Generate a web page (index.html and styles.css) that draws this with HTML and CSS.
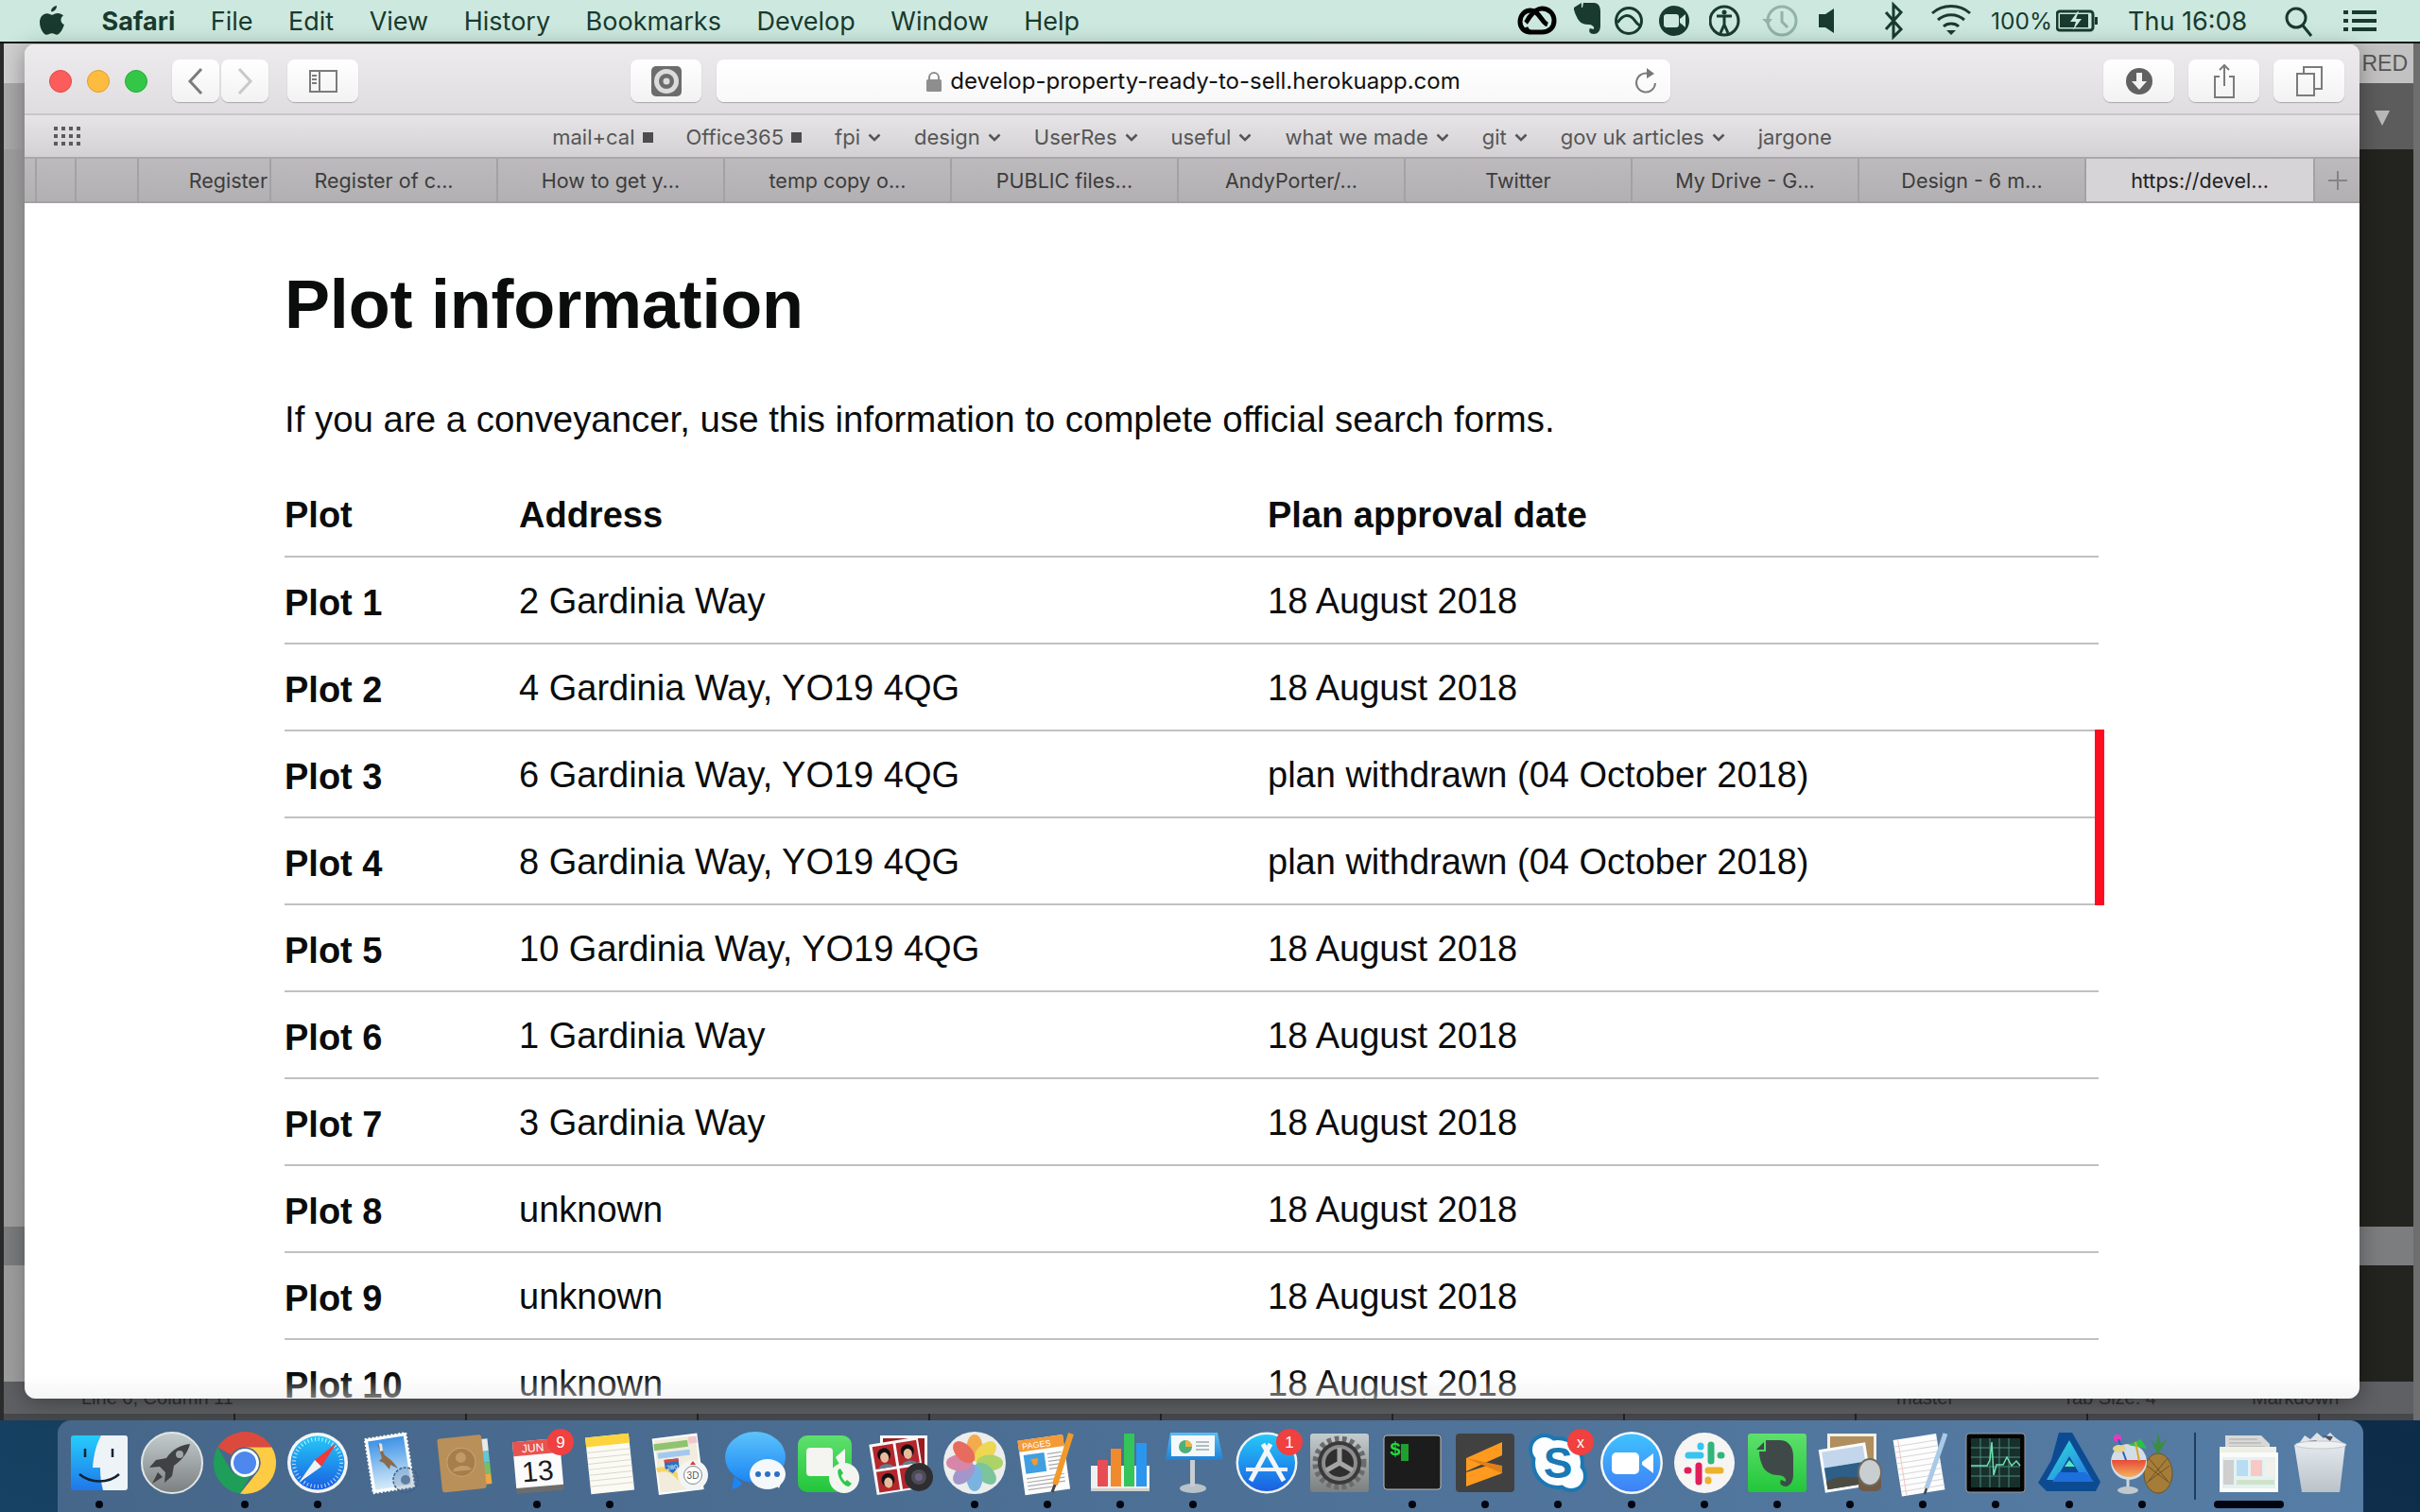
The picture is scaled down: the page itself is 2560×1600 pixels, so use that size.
FILE: index.html
```html
<!DOCTYPE html>
<html lang="en">
  <head>
    <meta charset="UTF-8" />
    <title>Plot information</title>
    <meta name="viewport" content="width=device-width, initial-scale=1.0" />
    <link rel="stylesheet" href="styles.css">
  </head>
  <body>
    <!-- shared gradients for the dock icons -->
    <svg class="svg-defs" aria-hidden="true">
      <defs>
        <linearGradient id="g-finder" x1="0" y1="0" x2="0" y2="1"><stop offset="0" stop-color="#25cdfb"/><stop offset="1" stop-color="#1f78ea"/></linearGradient>
        <linearGradient id="g-silver" x1="0" y1="0" x2="0" y2="1"><stop offset="0" stop-color="#c4cdce"/><stop offset="1" stop-color="#7b7f80"/></linearGradient>
        <linearGradient id="g-blue" x1="0" y1="0" x2="0" y2="1"><stop offset="0" stop-color="#25c8f8"/><stop offset="1" stop-color="#1a5fe2"/></linearGradient>
        <linearGradient id="g-sky" x1="0" y1="0" x2="0" y2="1"><stop offset="0" stop-color="#3f93e6"/><stop offset="1" stop-color="#d6ebf8"/></linearGradient>
        <linearGradient id="g-bubble" x1="0" y1="0" x2="0" y2="1"><stop offset="0" stop-color="#5cc3fb"/><stop offset="1" stop-color="#1b86f4"/></linearGradient>
        <linearGradient id="g-green" x1="0" y1="0" x2="0" y2="1"><stop offset="0" stop-color="#5ee06d"/><stop offset="1" stop-color="#22c63a"/></linearGradient>
        <linearGradient id="g-zoom" x1="0" y1="0" x2="0" y2="1"><stop offset="0" stop-color="#3fc2fe"/><stop offset="1" stop-color="#3e80f7"/></linearGradient>
        <linearGradient id="g-keynote" x1="0" y1="0" x2="0" y2="1"><stop offset="0" stop-color="#5dbcf5"/><stop offset="1" stop-color="#1e82d6"/></linearGradient>
        <linearGradient id="g-affinity" x1="0" y1="0" x2="1" y2="1"><stop offset="0" stop-color="#2fe3d8"/><stop offset="1" stop-color="#2474e8"/></linearGradient>
        <linearGradient id="g-drink" x1="0" y1="0" x2="0" y2="1"><stop offset="0" stop-color="#e9483a"/><stop offset="1" stop-color="#f2b35c"/></linearGradient>
        <linearGradient id="g-bin" x1="0" y1="0" x2="0" y2="1"><stop offset="0" stop-color="#f2f4f5"/><stop offset="1" stop-color="#c6cacc"/></linearGradient>
      </defs>
    </svg>

    <header class="menubar">
      <div class="menu-left">
        <svg class="apple" width="26" height="32" viewBox="0 0 26 32"><path d="M18 0c.3 2.900-2.400 6.600-5.900 6.300C11.700 3.300 14.900.3 18 0zM25 10.600c-3.700 2.300-3.200 7.800.9 9.700-1.300 3.800-4.500 10.400-7.600 10.400-2.100 0-2.900-1.400-5.400-1.400s-3.400 1.400-5.500 1.400C3.500 30.700 0 23 0 17.700 0 11.700 3.900 8.300 7.600 8.300c2.400 0 4 1.500 5.500 1.500 1.400 0 3.300-1.700 6-1.700 2.100 0 4.500 1 5.900 2.500z"/></svg>
        <span class="menu-app">Safari</span>
        <span>File</span>
        <span>Edit</span>
        <span>View</span>
        <span>History</span>
        <span>Bookmarks</span>
        <span>Develop</span>
        <span>Window</span>
        <span>Help</span>
      </div>
      <div class="menu-right">
        <svg width="59" height="44" viewBox="0 0 59 44"><g fill="none" stroke="#000" stroke-width="5"><path d="M14 34C7 34 3 29 3 23 3 16 8 11 14 11c9 0 12 13 18 15"/><path d="M9 29c1 3 3 5 6 5h11c8 0 13-5 13-12 0-8-6-13-13-13-6 0-10 5-13 9-2 3-3 5-4 6"/></g></svg>
        <svg width="44" height="44" viewBox="0 0 44 44"><path class="ico" d="M1 8l8-5v8H1zM11 3h11c5 0 7 4 7 9v15c0 6-3 9-7 9-4 0-6-3-4-6l4 1c1-3-2-5-6-5-6 0-10-3-12-8-2-4-3-7-3-10h9z"/></svg>
        <svg width="47" height="44" viewBox="0 0 47 44"><g class="ico-line"><circle cx="15" cy="22" r="13.500"/><path d="M3 24c6-9 12-9 16-5s5 8 9 8"/></g></svg>
        <svg width="53" height="44" viewBox="0 0 53 44"><circle class="ico" cx="16" cy="22" r="16"/><rect x="5" y="15" width="16" height="14" rx="3" fill="#cde9df"/><path d="M22 20l6-5v14l-6-5z" fill="#cde9df"/></svg>
        <svg width="56" height="44" viewBox="0 0 56 44"><circle class="ico-line" cx="16" cy="22" r="15"/><circle class="ico" cx="16" cy="13" r="2.500"/><path class="ico-line" d="M8 17h16M16 18v8M16 26l-4 9M16 26l4 9"/></svg>
        <svg width="60" height="44" viewBox="0 0 60 44"><g class="ico-fade"><circle cx="21" cy="22" r="15"/><path d="M21 12v11l6 6"/></g><path class="ico-solid-fade" d="M0 20h11l-5 6z"/></svg>
        <svg width="69" height="44" viewBox="0 0 69 44"><path class="ico" d="M0 15h7l9-6v26l-9-6H0z"/></svg>
        <svg width="49" height="44" viewBox="0 0 49 44"><path class="ico-line" d="M2 13l16 18-8 8V5l8 8-16 18"/></svg>
        <svg width="64" height="44" viewBox="0 0 64 44"><g class="ico-line"><path d="M2 14c11-10 29-10 40 0"/><path d="M8 21c8-7 20-7 28 0"/><path d="M14 28c4-4 12-4 16 0"/></g><path class="ico" d="M17 32h10l-5 5z"/></svg>
        <span class="menu-pct">100%</span>
        <svg width="54" height="44" viewBox="0 0 54 44"><rect class="ico-line" x="1" y="12" width="38" height="20" rx="3"/><path class="ico" d="M4 15h30v14H4z"/><path d="M23 12l-8 11h6l-3 9 9-12h-6l3-8z" fill="#cde9df"/><rect class="ico" x="41" y="18" width="3" height="8"/></svg>
        <span class="menu-clock">Thu 16:08</span>
        <svg class="menu-search" width="31" height="44" viewBox="0 0 31 44"><g class="ico-line"><circle cx="12" cy="19" r="10"/><path d="M19 27l9 11"/></g></svg>
        <svg class="menu-list" width="35" height="44" viewBox="0 0 35 44"><path class="ico" d="M0 11h5v4H0zM9 11h26v4H9zM0 20h5v4H0zM9 20h26v4H9zM0 29h5v4H0zM9 29h26v4H9z"/></svg>
      </div>
    </header>

    <main class="desktop">
      <div class="back-window">
        <div class="back-title">RED</div>
        <div class="back-bar"><span class="back-arrow"></span></div>
        <div class="back-body"><div class="back-band"></div></div>
        <div class="back-status">
          <span>Line 6, Column 11</span>
          <span>master</span>
          <span>Tab Size: 4</span>
          <span>Markdown</span>
        </div>
        <div class="back-foot"></div>
      </div>

      <section class="safari">
        <div class="toolbar">
          <div class="lights">
            <span class="light red"></span>
            <span class="light amber"></span>
            <span class="light green"></span>
          </div>
          <div class="nav-group">
            <button class="tool-btn nav-btn"><svg width="18" height="30" viewBox="0 0 18 30"><path class="tb-line" d="M15 2L3 15l12 13"/></svg></button>
            <button class="tool-btn nav-btn"><svg width="18" height="30" viewBox="0 0 18 30"><path class="tb-line dim" d="M3 2l12 13L3 28"/></svg></button>
          </div>
          <button class="tool-btn sidebar-btn"><svg width="30" height="24" viewBox="0 0 30 24"><path class="tb-line thin" d="M1 1h28v22H1zM11 1v22"/><path class="tb-line thin" d="M3 6h5M3 10h5M3 14h5"/></svg></button>
          <button class="tool-btn shot-btn"><svg width="34" height="34" viewBox="0 0 34 34"><rect x="1" y="1" width="32" height="32" rx="5" fill="#6c6c6c"/><circle cx="17" cy="17" r="13" fill="#dcdcdc"/><circle cx="17" cy="17" r="8" fill="#6c6c6c"/><circle cx="17" cy="17" r="3.500" fill="#dcdcdc"/></svg></button>
          <div class="url-bar">
            <span></span>
            <div class="url-text">
              <svg width="16" height="22" viewBox="0 0 16 22"><path d="M3 10V7a5 5 0 0 1 10 0v3" fill="none" stroke="#8e8e8e" stroke-width="2"/><rect y="9" width="16" height="13" rx="1.500" fill="#8e8e8e"/></svg>
              <span>develop-property-ready-to-sell.herokuapp.com</span>
            </div>
            <svg class="reload" width="24" height="30" viewBox="0 0 24 30"><path class="tb-line thin" d="M15 7a10 10 0 1 0 7 10"/><path d="M13 1l8 6-8 5z" fill="#777"/></svg>
          </div>
          <div class="tool-right">
            <button class="tool-btn"><svg width="28" height="28" viewBox="0 0 28 28"><circle cx="14" cy="14" r="14" fill="#616161"/><path d="M11 5h6v9h5l-8 9-8-9h5z" fill="#f4f4f4"/></svg></button>
            <button class="tool-btn"><svg width="24" height="38" viewBox="0 0 24 38"><path class="tb-line thin" d="M7 14H2v22h20V14h-5M12 24V2M7 7l5-5 5 5"/></svg></button>
            <button class="tool-btn"><svg width="28" height="32" viewBox="0 0 28 32"><path class="tb-line thin" d="M1 8h18v23H1zM8 8V1h19v23h-8"/></svg></button>
          </div>
        </div>

        <nav class="bookmarks">
          <svg class="grid-icon" width="28" height="20" viewBox="0 0 28 20"><path d="M0 0h4v4H0zM8 0h4v4H8zM16 0h4v4h-4zM24 0h4v4h-4zM0 8h4v4H0zM8 8h4v4H8zM16 8h4v4h-4zM24 8h4v4h-4zM0 16h4v4H0zM8 16h4v4H8zM16 16h4v4h-4zM24 16h4v4h-4z" fill="#5b5b5b"/></svg>
          <div class="bookmark-list">
            <span class="bm">mail+cal<i class="bm-square"></i></span>
            <span class="bm">Office365<i class="bm-square"></i></span>
            <span class="bm">fpi<svg class="bm-chev" width="14" height="9" viewBox="0 0 14 9"><path d="M1.500 1.500L7 7l5.500-5.500"/></svg></span>
            <span class="bm">design<svg class="bm-chev" width="14" height="9" viewBox="0 0 14 9"><path d="M1.500 1.500L7 7l5.500-5.500"/></svg></span>
            <span class="bm">UserRes<svg class="bm-chev" width="14" height="9" viewBox="0 0 14 9"><path d="M1.500 1.500L7 7l5.500-5.500"/></svg></span>
            <span class="bm">useful<svg class="bm-chev" width="14" height="9" viewBox="0 0 14 9"><path d="M1.500 1.500L7 7l5.500-5.500"/></svg></span>
            <span class="bm">what we made<svg class="bm-chev" width="14" height="9" viewBox="0 0 14 9"><path d="M1.500 1.500L7 7l5.500-5.500"/></svg></span>
            <span class="bm">git<svg class="bm-chev" width="14" height="9" viewBox="0 0 14 9"><path d="M1.500 1.500L7 7l5.500-5.500"/></svg></span>
            <span class="bm">gov uk articles<svg class="bm-chev" width="14" height="9" viewBox="0 0 14 9"><path d="M1.500 1.500L7 7l5.500-5.500"/></svg></span>
            <span class="bm">jargone</span>
          </div>
        </nav>

        <div class="tabs">
          <div class="tab tab-a"></div>
          <div class="tab tab-b"></div>
          <div class="tab tab-c"></div>
          <div class="tab tab-clip">Register</div>
          <div class="tab">Register of c...</div>
          <div class="tab">How to get y...</div>
          <div class="tab">temp copy o...</div>
          <div class="tab">PUBLIC files...</div>
          <div class="tab">AndyPorter/...</div>
          <div class="tab">Twitter</div>
          <div class="tab">My Drive - G...</div>
          <div class="tab">Design - 6 m...</div>
          <div class="tab active">https://devel...</div>
          <div class="tab tab-add"><svg width="20" height="20" viewBox="0 0 20 20"><path d="M10 0v20M0 10h20" stroke="#848484" stroke-width="2"/></svg></div>
        </div>

        <div class="page">
          <h1 class="page-title">Plot information</h1>
          <p class="page-lead">If you are a conveyancer, use this information to complete official search forms.</p>
          <table class="plots">
            <thead>
              <tr><th>Plot</th><th>Address</th><th>Plan approval date</th></tr>
            </thead>
            <tbody>
              <tr><th>Plot 1</th><td>2 Gardinia Way</td><td>18 August 2018</td></tr>
              <tr><th>Plot 2</th><td>4 Gardinia Way, YO19 4QG</td><td>18 August 2018</td></tr>
              <tr class="withdrawn"><th>Plot 3</th><td>6 Gardinia Way, YO19 4QG</td><td>plan withdrawn (04 October 2018)</td></tr>
              <tr class="withdrawn"><th>Plot 4</th><td>8 Gardinia Way, YO19 4QG</td><td>plan withdrawn (04 October 2018)</td></tr>
              <tr><th>Plot 5</th><td>10 Gardinia Way, YO19 4QG</td><td>18 August 2018</td></tr>
              <tr><th>Plot 6</th><td>1 Gardinia Way</td><td>18 August 2018</td></tr>
              <tr><th>Plot 7</th><td>3 Gardinia Way</td><td>18 August 2018</td></tr>
              <tr><th>Plot 8</th><td>unknown</td><td>18 August 2018</td></tr>
              <tr><th>Plot 9</th><td>unknown</td><td>18 August 2018</td></tr>
              <tr><th>Plot 10</th><td>unknown</td><td>18 August 2018</td></tr>
            </tbody>
          </table>
        </div>
      </section>

      <footer class="dock">
        <div class="dock-item on"><svg viewBox="0 0 66 66"><rect x="3" y="4" width="60" height="58" rx="3" fill="url(#g-finder)"/><path d="M35 4h25a3 3 0 0 1 3 3v52a3 3 0 0 1-3 3H37c-2-8-3-14-3-24h-8c1-14 4-25 9-34z" fill="#eef3f8"/><path d="M18 18v9M47 18v9" stroke="#123" stroke-width="2.500"/><path d="M12 45c12 10 31 10 42 0" fill="none" stroke="#123" stroke-width="2.500"/></svg><i></i></div>

        <div class="dock-item"><svg viewBox="0 0 66 66"><circle cx="33" cy="33" r="32" fill="url(#g-silver)" stroke="#e2e6e6" stroke-width="2"/><path d="M52 13c-10 1-19 6-25 15l-11 2-7 8 11-1 6 6-1 11 8-7 2-11c9-6 15-15 17-23z" fill="#3f4144"/><circle cx="41" cy="24" r="4" fill="#a0a5a6"/><path d="M18 43l-6 12 11-7z" fill="#3f4144"/></svg><i></i></div>

        <div class="dock-item on"><svg viewBox="0 0 66 66"><path d="M33 0a33 33 0 0 1 28.600 16.500H33a16.500 16.500 0 0 0-14.300 8.300L4.400 16.500A33 33 0 0 1 33 0z" fill="#db4a3d"/><path d="M4.400 16.500A33 33 0 0 0 28 65.600L42 41.500a16.500 16.500 0 0 1-23.300.2z" fill="#1f9e5a"/><path d="M61.600 16.500A33 33 0 0 1 28 65.600l19.300-24.300A16.500 16.500 0 0 0 33 16.500z" fill="#fecb45"/><circle cx="33" cy="33" r="15" fill="#fff"/><circle cx="33" cy="33" r="12" fill="#4e87ee"/></svg><i></i></div>

        <div class="dock-item on"><svg viewBox="0 0 66 66"><circle cx="33" cy="33" r="32" fill="#f3f5f6"/><circle cx="33" cy="33" r="28.500" fill="url(#g-blue)"/><circle cx="33" cy="33" r="25" fill="none" stroke="#fff" stroke-width="4" stroke-dasharray="1 2.800" opacity=".75"/><path d="M53 12L37 37l-7-7z" fill="#f0393a"/><path d="M13 54l17-24 7 7z" fill="#f2f2f2"/></svg><i></i></div>

        <div class="dock-item"><svg viewBox="0 0 66 66"><g transform="rotate(-9 33 33)"><rect x="10" y="4" width="44" height="58" fill="#fff" stroke="#fff" stroke-width="2" stroke-dasharray="2 2"/><rect x="13" y="7" width="38" height="52" fill="url(#g-sky)"/></g><path d="M19 13c5 3 6 8 8 12 4 3 8 5 14 14l-8-4-1 5-6-7-5-2 3-3-3-10z" fill="#8a6a48"/><path d="M21 12l3 1 1 7-3 1z" fill="#ece6d8"/><circle cx="49" cy="51" r="13" fill="#4f6f93" fill-opacity=".25" stroke="#3f5f86" stroke-width="1.500" stroke-dasharray="3 1.500"/><circle cx="49" cy="51" r="5" fill="#3f5f86" opacity=".7"/></svg><i></i></div>

        <div class="dock-item"><svg viewBox="0 0 66 66"><g transform="rotate(-6 33 33)"><rect x="53" y="10" width="7" height="13" fill="#e7eaea"/><rect x="53" y="23" width="7" height="12" fill="#64c6d6"/><rect x="53" y="35" width="7" height="12" fill="#76bf68"/><rect x="53" y="47" width="7" height="11" fill="#eca941"/><rect x="7" y="5" width="47" height="57" rx="3" fill="#b98f5a"/><circle cx="30" cy="32" r="15" fill="#a67e4c" stroke="#c7a473" stroke-width="1"/><circle cx="30" cy="27" r="5.500" fill="#c19a68"/><path d="M20 41c2-7 18-7 20 0z" fill="#c19a68"/></g></svg><i></i></div>

        <div class="dock-item on"><svg viewBox="0 0 66 66"><g transform="rotate(-5 33 33)"><rect x="9" y="14" width="50" height="50" rx="2" fill="#6d6d6d"/><rect x="9" y="9" width="50" height="49" fill="#fbfbfb"/><rect x="9" y="9" width="50" height="15" fill="#e8534f"/><text class="svg-text" x="30" y="21" font-size="12" fill="#fff" text-anchor="middle">JUN</text><text class="svg-text" x="33" y="52" font-size="30" fill="#1a1a1a" text-anchor="middle">13</text></g><circle cx="58" cy="11" r="14" fill="#f0403f"/><text class="svg-text" x="58" y="17" font-size="17" fill="#fff" text-anchor="middle">9</text></svg><i></i></div>

        <div class="dock-item on"><svg viewBox="0 0 66 66"><g transform="rotate(-6 33 33)"><rect x="10" y="4" width="46" height="60" fill="#fbfaf3"/><rect x="10" y="4" width="46" height="10" fill="#fcd43e"/><path d="M10 20h46M10 26h46M10 32h46M10 38h46M10 44h46M10 50h46M10 56h46" stroke="#d9d8d0"/></g></svg><i></i></div>

        <div class="dock-item"><svg viewBox="0 0 66 66"><g transform="rotate(-7 30 33)"><rect x="5" y="5" width="46" height="58" fill="#f1ecdc" stroke="#fff" stroke-width="2"/><rect x="5" y="10" width="36" height="7" fill="#8fc36f"/><rect x="8" y="20" width="34" height="6" fill="#a2c8f0"/><rect x="42" y="7" width="9" height="7" fill="#f2c6d0"/><path d="M5 38c12-2 18 2 27 18" fill="none" stroke="#f5d569" stroke-width="5"/><path d="M14 28h15v9l-7.500 6-7.500-6z" fill="#2e6fc1"/><path d="M14 28h15v3H14z" fill="#d8473c"/><text class="svg-text" x="21.500" y="39" font-size="7" fill="#fff" text-anchor="middle">280</text></g><circle cx="44" cy="46" r="16" fill="#f3f5f5"/><circle cx="44" cy="46" r="9.500" fill="#fff" stroke="#7e8a90"/><text class="svg-text" x="44" y="50" font-size="10" fill="#555" text-anchor="middle">3D</text><path d="M44 31l3 4h-6z" fill="#e0372f"/></svg><i></i></div>

        <div class="dock-item"><svg viewBox="0 0 66 66"><path d="M8 61c5-1 9-3 11-6l-8-8z" fill="#1b86f4"/><ellipse cx="33" cy="27" rx="32" ry="27" fill="url(#g-bubble)"/><path d="M58 60l-5-6 7 1z" fill="#f4f8fb"/><ellipse cx="46" cy="45" rx="19" ry="16" fill="#f4f8fb"/><circle cx="36" cy="45" r="3" fill="#2c6fc3"/><circle cx="46" cy="45" r="3" fill="#2c6fc3"/><circle cx="56" cy="45" r="3" fill="#2c6fc3"/></svg><i></i></div>

        <div class="dock-item"><svg viewBox="0 0 66 66"><rect x="1" y="4" width="57" height="60" rx="10" fill="url(#g-green)"/><rect x="10" y="17" width="28" height="30" rx="4" fill="#f4f4f0"/><path d="M41 27l10-9v28z" fill="#f4f4f0"/><ellipse cx="50" cy="49" rx="16" ry="16" fill="#f3f6f0"/><path d="M44 40c-3 4 4 18 11 18l3-3-5-4-2 2c-2-2-4-5-4-7l2-2-3-5z" fill="#2fc84a"/></svg><i></i></div>

        <div class="dock-item"><svg viewBox="0 0 66 66"><rect x="10" y="4" width="50" height="50" fill="#fbfbfb"/><rect x="13" y="7" width="44" height="44" fill="#9a1c22"/><g transform="rotate(-9 30 35)"><rect x="2" y="9" width="52" height="54" fill="#f7f7f7"/><rect x="5" y="12" width="22" height="24" fill="#b3262c"/><rect x="30" y="12" width="22" height="24" fill="#b3262c"/><rect x="5" y="39" width="22" height="22" fill="#b3262c"/><rect x="30" y="39" width="22" height="22" fill="#b3262c"/><circle cx="16" cy="22" r="7" fill="#111"/><circle cx="41" cy="22" r="7" fill="#111"/><circle cx="16" cy="49" r="7" fill="#111"/><ellipse cx="16" cy="25" rx="4.500" ry="5.500" fill="#e9bb9d"/><ellipse cx="41" cy="25" rx="4.500" ry="5.500" fill="#e9bb9d"/><ellipse cx="16" cy="52" rx="4.500" ry="5.500" fill="#e9bb9d"/><path d="M8 36c2-5 14-5 16 0zM33 36c2-5 14-5 16 0z" fill="#5f7f8f"/></g><circle cx="51" cy="48" r="15" fill="#2e2e30"/><circle cx="51" cy="48" r="8" fill="#4c4c55"/><circle cx="51" cy="48" r="4" fill="#6f5f85"/></svg><i></i></div>

        <div class="dock-item on"><svg viewBox="0 0 66 66"><circle cx="33" cy="33" r="33" fill="#eceded"/><g opacity=".88"><ellipse cx="33" cy="17" rx="8.500" ry="14" fill="#f5a33b"/><ellipse cx="33" cy="17" rx="8.500" ry="14" fill="#eed53e" transform="rotate(45 33 33)"/><ellipse cx="33" cy="17" rx="8.500" ry="14" fill="#a5cf55" transform="rotate(90 33 33)"/><ellipse cx="33" cy="17" rx="8.500" ry="14" fill="#6cc08f" transform="rotate(135 33 33)"/><ellipse cx="33" cy="17" rx="8.500" ry="14" fill="#6aaddf" transform="rotate(180 33 33)"/><ellipse cx="33" cy="17" rx="8.500" ry="14" fill="#9a8bc6" transform="rotate(225 33 33)"/><ellipse cx="33" cy="17" rx="8.500" ry="14" fill="#d478a0" transform="rotate(270 33 33)"/><ellipse cx="33" cy="17" rx="8.500" ry="14" fill="#e85b4a" transform="rotate(315 33 33)"/></g></svg><i></i></div>

        <div class="dock-item on"><svg viewBox="0 0 66 66"><g transform="rotate(-8 30 33)"><rect x="5" y="6" width="48" height="58" fill="#fdfdfd"/><rect x="5" y="6" width="48" height="12" fill="#f59a35"/><text class="svg-text" x="9" y="16" font-size="9" fill="#fff">PAGES</text><rect x="9" y="22" width="22" height="20" fill="#3f9fe0"/><path d="M16 27h8l-2 7h-4z" fill="#f29a2e"/><path d="M34 24h15M34 28h15M34 32h15M34 36h15M34 40h15M9 47h40M9 51h40M9 55h40M9 59h30" stroke="#aaa" stroke-width="1.200"/></g><path d="M58 2L41 56" stroke="#f19a2a" stroke-width="6"/><path d="M41 56l-3 8" stroke="#444" stroke-width="3"/></svg><i></i></div>

        <div class="dock-item on"><svg viewBox="0 0 66 66"><rect x="2" y="36" width="62" height="24" fill="#f0f1ee"/><rect x="2" y="60" width="62" height="3" fill="#cfd1cd"/><rect x="9" y="30" width="11" height="28" fill="#e84d55"/><rect x="23" y="18" width="11" height="40" fill="#f08a2e"/><rect x="37" y="2" width="11" height="56" fill="#35c45a"/><rect x="50" y="12" width="11" height="46" fill="#2b96ee"/></svg><i></i></div>

        <div class="dock-item on"><svg viewBox="0 0 66 66"><ellipse cx="33" cy="60" rx="14" ry="5" fill="#b8c2c8"/><rect x="30" y="30" width="5" height="28" fill="#c7ced3"/><path d="M4 30L9 1h50l6 29z" fill="url(#g-keynote)"/><rect x="10" y="4" width="46" height="22" fill="#f5f8fa"/><circle cx="25" cy="16" r="7" fill="#4db07a"/><path d="M25 16V9a7 7 0 0 1 7 7z" fill="#f0b23c"/><path d="M36 11h14M36 15h14M36 19h14" stroke="#9aa" stroke-width="1.500"/></svg><i></i></div>

        <div class="dock-item"><svg viewBox="0 0 66 66"><circle cx="33" cy="33" r="32.500" fill="#eef2f5"/><circle cx="33" cy="33" r="30" fill="url(#g-blue)"/><path d="M11 40h44" stroke="#eaf2fa" stroke-width="4"/><path d="M37 13L16 52M29 13l22 39" stroke="#f2f6fa" stroke-width="5"/><circle cx="57" cy="11" r="14" fill="#f0403f"/><text class="svg-text" x="57" y="17" font-size="17" fill="#fff" text-anchor="middle">1</text></svg><i></i></div>

        <div class="dock-item"><svg viewBox="0 0 66 66"><rect x="2" y="2" width="62" height="62" rx="3" fill="url(#g-silver)"/><circle cx="33" cy="33" r="25" fill="none" stroke="#6b6b6b" stroke-width="7" stroke-dasharray="4.500 3.500"/><circle cx="33" cy="33" r="23" fill="#3a3a3a"/><circle cx="33" cy="33" r="19" fill="#8d8d8d"/><circle cx="33" cy="33" r="15" fill="#2f2f2f"/><path d="M33 33V17M33 33l14 8M33 33l-14 8" stroke="#a5a5a5" stroke-width="5"/></svg><i></i></div>

        <div class="dock-item on"><svg viewBox="0 0 66 66"><rect x="3" y="4" width="60" height="57" rx="3" fill="#1c1c1c" stroke="#bcbcbc"/><text class="svg-text term-text" x="9" y="25" font-size="20" fill="#23d83b">$</text><rect x="21" y="13" width="8" height="18" fill="#1f9f2d"/></svg><i></i></div>

        <div class="dock-item on"><svg viewBox="0 0 66 66"><rect x="2" y="2" width="62" height="62" rx="4" fill="#414141"/><path d="M13 28L51 11v14L13 42zM13 43l28-9 10 5v5L13 58z" fill="#ff9a1f"/><path d="M13 28l38 16v-8L13 28z" fill="#e27f14"/></svg><i></i></div>

        <div class="dock-item on"><svg viewBox="0 0 66 66"><g fill="#1a78b4"><circle cx="19" cy="19" r="17"/><circle cx="47" cy="47" r="17"/><circle cx="33" cy="33" r="28"/></g><g fill="#fbfdff"><circle cx="19" cy="19" r="13"/><circle cx="47" cy="47" r="13"/><circle cx="33" cy="33" r="24"/></g><text class="svg-text skype-s" x="33" y="49" font-size="46" fill="#1a78b4" text-anchor="middle">S</text><circle cx="57" cy="11" r="14" fill="#f0403f"/><text class="svg-text" x="57" y="17" font-size="16" fill="#fff" text-anchor="middle">x</text></svg><i></i></div>

        <div class="dock-item on"><svg viewBox="0 0 66 66"><circle cx="33" cy="33" r="33" fill="#f5f7f9"/><circle cx="33" cy="33" r="30.500" fill="url(#g-zoom)"/><rect x="12" y="22" width="29" height="23" rx="5" fill="#fff"/><path d="M44 32l12-9v21l-12-9z" fill="#fff"/></svg><i></i></div>

        <div class="dock-item on"><svg viewBox="0 0 66 66"><circle cx="33" cy="33" r="32" fill="#f6f5f3"/><g stroke-width="7" stroke-linecap="round" fill="none"><path d="M16 25h13M29 15v1" stroke="#36c5f0"/><path d="M40 14v17M50 25h1" stroke="#2eb67d"/><path d="M37 41h13M37 51v1" stroke="#ecb22e"/><path d="M27 36v17M15 41h1" stroke="#e01e5a"/></g></svg><i></i></div>

        <div class="dock-item on"><svg viewBox="0 0 66 66"><rect x="2" y="2" width="62" height="62" rx="3" fill="url(#g-green)"/><path class="elephant" d="M11 19l8-8v8zM21 9h15c8 0 14 6 14 17v20c0 7-4 12-8 12-5 0-7-4-5-7l5 2c1-4-3-7-8-7-9 0-15-5-17-11-2-5-3-9-3-14h7z"/></svg><i></i></div>

        <div class="dock-item on"><svg viewBox="0 0 66 66"><rect x="9" y="2" width="52" height="46" fill="#f2efe6"/><rect x="12" y="5" width="46" height="40" fill="#b08e5d"/><g transform="rotate(-9 28 38)"><rect x="3" y="15" width="50" height="46" fill="#fbfbfb"/><rect x="6" y="18" width="44" height="17" fill="#c3d6ec"/><rect x="6" y="35" width="44" height="23" fill="#2e5f88"/><path d="M6 50c12-6 26-2 44 4v4H6z" fill="#4c4c44"/></g><rect x="42" y="44" width="24" height="19" rx="5" fill="#6e5c48"/><ellipse cx="54" cy="43" rx="12" ry="14" fill="#c9ced1" stroke="#6f6a62" stroke-width="2"/></svg><i></i></div>

        <div class="dock-item on"><svg viewBox="0 0 66 66"><g transform="rotate(-9 30 35)"><rect x="6" y="5" width="46" height="60" fill="#fdfdfd"/><path d="M6 12h46M6 18h46M6 24h46M6 30h46M6 36h46M6 42h46M6 48h46M6 54h46M6 60h46" stroke="#d6d6d6"/><path d="M11 5v60" stroke="#f2c6c6"/></g><path d="M57 2L37 60" stroke="#aac9e6" stroke-width="5"/><path d="M37 60l-2 6" stroke="#444" stroke-width="2.500"/></svg><i></i></div>

        <div class="dock-item on"><svg viewBox="0 0 66 66"><rect x="2" y="2" width="62" height="62" rx="3" fill="#050505" stroke="#9a9a9a"/><rect x="7" y="7" width="52" height="52" fill="#17302c"/><path d="M7 17h52M7 27h52M7 37h52M7 47h52M17 7v52M27 7v52M37 7v52M47 7v52" stroke="#4f8a7c"/><polyline points="7,36 24,36 27,30 29,11 31,46 34,35 41,35 45,27 50,36 55,31 59,36" fill="none" stroke="#6fe0b0" stroke-width="1.500"/></svg><i></i></div>

        <div class="dock-item on"><svg viewBox="0 0 66 66"><path d="M22 1h14l30 52-5 10H9L0 54l14-24z" fill="#0c4b92"/><path d="M33 9l24 42H9z" fill="url(#g-affinity)"/><path d="M33 26l11 19H22z" fill="#0c4b92"/><path d="M22 43h28l9 10H15z" fill="#1d6fdc"/><path d="M28 37l5-7 6 7z" fill="#52e8c0"/></svg><i></i></div>

        <div class="dock-item on"><svg viewBox="0 0 66 66"><g fill="#a57d38" stroke="#6f5223" stroke-width="1"><ellipse cx="50" cy="44" rx="15" ry="21"/></g><path d="M38 36l24 18M62 36L38 54M40 28l20 24M60 28L40 52" stroke="#6f5223" stroke-width="1"/><path d="M50 25L42 8l6 6 2-13 3 12 7-6-6 10" fill="#3b8d3f"/><circle cx="19" cy="32" r="19" fill="#e8f0f4" opacity=".85"/><path d="M1 30h36a18 18 0 0 1-36 0z" fill="url(#g-drink)"/><path d="M18 50v9" stroke="#cfd6da" stroke-width="3"/><ellipse cx="18" cy="62" rx="11" ry="4" fill="#c1c9cd"/><circle cx="7" cy="7" r="4" fill="#e63bbf"/><path d="M8 8l8 22" stroke="#2b5dc0" stroke-width="2"/><path d="M18 14l14-6 6 10z" fill="#2bc04a"/><path d="M26 11l4 20" stroke="#d9a52e" stroke-width="2"/><ellipse cx="9" cy="18" rx="7" ry="4" fill="#e4d68b"/></svg><i></i></div>

        <div class="dock-divider"></div>

        <div class="dock-item stack on"><svg viewBox="0 0 66 66"><path d="M8 4h38l9 9v10H8z" fill="#d8d8d6"/><path d="M12 8h30M12 12h34M12 16h38" stroke="#a9a9a9"/><rect x="2" y="16" width="60" height="8" fill="#eef0e6"/><rect x="2" y="22" width="62" height="42" fill="#fbfbfa"/><rect x="5" y="27" width="56" height="33" fill="#e4f2f1"/><rect x="6" y="30" width="11" height="26" fill="#cfcfcf"/><rect x="20" y="30" width="12" height="17" fill="#b7dcf4"/><rect x="35" y="30" width="12" height="17" fill="#f6c9c7"/><rect x="50" y="30" width="10" height="17" fill="#f3efe9"/><rect x="20" y="51" width="40" height="5" fill="#cfe3c9"/></svg><i></i></div>

        <div class="dock-item"><svg viewBox="0 0 66 66"><path d="M8 14l7-10 6 4 7-7 7 6 7-6 5 5 10 7z" fill="#dfe3e6"/><path d="M18 10l6 4 4-5zM34 4l8 6 3-5z" fill="#4c5566"/><path d="M34 10l7 3-6 2z" fill="#3f9fc6"/><path d="M4 14h54l-6 50H12z" fill="url(#g-bin)" opacity=".9"/><ellipse cx="32" cy="14" rx="27" ry="4" fill="#eef0f2" stroke="#c6cacc"/></svg><i></i></div>
      </footer>
    </main>
  </body>
</html>
```

FILE: styles.css
```css
* {
  box-sizing: border-box;
}
html,
body {
  margin: 0;
  height: 100%;
}
body {
  width: 2560px;
  height: 1600px;
  overflow: hidden;
  display: flex;
  flex-direction: column;
  font-family: "Liberation Sans", Arial, sans-serif;
  color: #0b0c0c;
}
.svg-defs {
  position: absolute;
  width: 0;
  height: 0;
}
.svg-text {
  font-family: "Liberation Sans", Arial, sans-serif;
}
.term-text {
  font-family: "Liberation Mono", monospace;
  font-weight: bold;
}
.skype-s {
  font-weight: bold;
}

/* menu bar */
.menubar {
  height: 44px;
  flex: none;
  background: #cde9df;
  display: flex;
  justify-content: space-between;
  font-family: Inter, "Liberation Sans", sans-serif;
  font-size: 27px;
  color: #193a2e;
}
.menu-left {
  display: flex;
  align-items: center;
  gap: 37.5px;
  padding-left: 42px;
}
.apple {
  fill: #193a2e;
  margin-right: 2px;
}
.menu-app {
  font-weight: 700;
}
.menu-right {
  display: flex;
  align-items: center;
  padding-right: 46px;
}
.menu-pct {
  width: 69px;
  font-size: 24.5px;
}
.menu-clock {
  margin-left: 22px;
  width: 166px;
}
.menu-search {
  margin-right: 31px;
}
.ico {
  fill: #193a2e;
}
.ico-line {
  fill: none;
  stroke: #193a2e;
  stroke-width: 3;
}
.ico-fade {
  fill: none;
  stroke: #93b3a8;
  stroke-width: 3;
}
.ico-solid-fade {
  fill: #93b3a8;
}

/* desktop and the window behind safari */
.desktop {
  position: relative;
  flex: 1;
  border-top: 2px solid #0e1110;
  background: linear-gradient(200deg, #1c4a6e, #0d2c4a 60%, #174263);
}
.back-window {
  position: absolute;
  left: 0;
  top: 0;
  width: 2560px;
  height: 1457px;
  border-left: 4px solid #2b2b2b;
  border-right: 7px solid #6e6e6e;
  display: flex;
  flex-direction: column;
  background: #23241f;
}
.back-title {
  height: 42px;
  background: linear-gradient(90deg, #cfcfcf, #c2c2c2);
  text-align: right;
  padding-right: 6px;
  font-size: 23px;
  line-height: 42px;
  color: #555;
}
.back-bar {
  height: 70px;
  background: linear-gradient(90deg, #a9a9a9 30px, #5c5c5c 30px);
  position: relative;
}
.back-arrow {
  position: absolute;
  left: 2508px;
  top: 29px;
  border-left: 8px solid transparent;
  border-right: 8px solid transparent;
  border-top: 16px solid #b9b9b9;
}
.back-body {
  flex: 1;
  position: relative;
  background: linear-gradient(90deg, #9c9c9c, #a9a9a9 30px, #23241f 30px);
}
.back-band {
  position: absolute;
  left: 0;
  right: 0;
  top: 1140px;
  height: 41px;
  background: #7c7d7f;
}
.back-status {
  height: 34px;
  flex: none;
  background: #5f6063;
  display: grid;
  grid-template-columns: 1920px 176px 200px 1fr;
  align-items: center;
  padding-left: 82px;
  font-size: 20px;
  color: #303033;
}
.back-foot {
  height: 7px;
  flex: none;
  background: repeating-linear-gradient(90deg, #47484b 0, #47484b 243px, #232325 243px, #232325 245px);
}

/* safari window */
.safari {
  position: absolute;
  left: 26px;
  top: 1px;
  width: 2470px;
  height: 1433px;
  display: flex;
  flex-direction: column;
  border-radius: 10px 10px 12px 12px;
  overflow: hidden;
  box-shadow: 0 4px 24px rgba(0, 0, 0, 0.35);
  background: #fff;
}
.toolbar {
  height: 75px;
  flex: none;
  display: flex;
  align-items: center;
  padding: 4px 16px 0 26px;
  background: linear-gradient(#edebed, #dfdddf);
  border-bottom: 2px solid #c8c6c8;
}
.lights {
  display: flex;
  gap: 16px;
}
.light {
  width: 24px;
  height: 24px;
  border-radius: 50%;
}
.light.red {
  background: #fc5d5c;
  border: 1px solid #e2463f;
}
.light.amber {
  background: #fdbc40;
  border: 1px solid #e09e2c;
}
.light.green {
  background: #33c748;
  border: 1px solid #25a93a;
}
.tool-btn {
  width: 75px;
  height: 45px;
  padding: 0;
  border: none;
  border-radius: 8px;
  background: linear-gradient(#ffffff, #f2f2f2);
  box-shadow: 0 1px 1px rgba(0, 0, 0, 0.25);
  display: flex;
  align-items: center;
  justify-content: center;
}
.nav-group {
  display: flex;
  gap: 2px;
  margin-left: 26px;
}
.nav-btn {
  width: 50px;
}
.sidebar-btn {
  margin-left: 20px;
}
.shot-btn {
  margin-left: 288px;
}
.tb-line {
  fill: none;
  stroke: #7b7b7b;
  stroke-width: 3;
}
.tb-line.thin {
  stroke-width: 2;
}
.tb-line.dim {
  stroke: #c9c9c9;
}
.url-bar {
  width: 1009px;
  height: 45px;
  margin-left: 16px;
  border-radius: 8px;
  background: linear-gradient(#ffffff, #f8f8f8);
  box-shadow: 0 1px 1px rgba(0, 0, 0, 0.25);
  display: grid;
  grid-template-columns: 1fr auto 1fr;
  align-items: center;
  font-family: Inter, "Liberation Sans", sans-serif;
  font-size: 24px;
  color: #111;
}
.url-text {
  display: flex;
  align-items: center;
  gap: 9px;
}
.reload {
  justify-self: end;
  margin-right: 14px;
}
.tool-right {
  margin-left: auto;
  display: flex;
  gap: 15px;
}

.bookmarks {
  height: 46px;
  flex: none;
  position: relative;
  display: flex;
  align-items: center;
  justify-content: center;
  padding-top: 2px;
  background: linear-gradient(#e6e4e6, #d3d1d3);
  border-bottom: 2px solid #a9a7a9;
  font-family: Inter, "Liberation Sans", sans-serif;
  font-size: 22px;
  color: #565656;
}
.grid-icon {
  position: absolute;
  left: 31px;
  top: 12px;
}
.bookmark-list {
  display: flex;
  gap: 35px;
}
.bm {
  display: flex;
  align-items: center;
  gap: 8px;
}
.bm-square {
  width: 11px;
  height: 11px;
  background: #4d4d4d;
}
.bm-chev {
  fill: none;
  stroke: #565656;
  stroke-width: 2.500;
}

.tabs {
  height: 47px;
  flex: none;
  display: flex;
  background: linear-gradient(#bcbabc, #b2b0b2);
  border-bottom: 2px solid #a3a1a3;
  font-family: Inter, "Liberation Sans", sans-serif;
  font-size: 21.5px;
  color: #3c3c3c;
}
.tab {
  width: 240px;
  display: flex;
  align-items: center;
  justify-content: center;
  border-right: 2px solid #a3a1a3;
}
.tab-a {
  width: 13px;
}
.tab-b {
  width: 42px;
}
.tab-c {
  width: 66px;
}
.tab-clip {
  width: 140px;
  justify-content: flex-end;
  padding-right: 2px;
}
.tab.active {
  width: 242px;
  background: #d6d4d6;
  color: #222;
}
.tab-add {
  width: 47px;
  border-right: none;
}

/* page */
.page {
  flex: 1;
  overflow: hidden;
  position: relative;
  padding-left: 275px;
}
.page::after {
  content: "";
  position: absolute;
  left: 0;
  right: 0;
  bottom: 0;
  height: 24px;
  background: linear-gradient(rgba(235, 235, 235, 0), rgba(235, 235, 235, 0.5));
}
.page-title {
  margin: 67px 0 0;
  font-size: 72px;
  line-height: 80px;
  font-weight: 700;
  letter-spacing: -0.2px;
}
.page-lead {
  margin: 58px 0 0;
  font-size: 38.4px;
  line-height: 48px;
}
.plots {
  width: 1919px;
  margin-top: 30px;
  border-collapse: separate;
  border-spacing: 0;
  table-layout: fixed;
  font-size: 38px;
}
.plots th,
.plots td {
  height: 92px;
  padding: 2px 0 0;
  text-align: left;
  vertical-align: middle;
  border-bottom: 2px solid #bfc1c3;
  font-weight: 400;
}
.plots th {
  font-weight: 700;
  width: 248px;
}
.plots th:nth-child(2),
.plots td:nth-child(2) {
  width: 792px;
}
.plots thead th {
  font-weight: 700;
  width: auto;
  padding-top: 5px;
}
.plots thead th:first-child {
  width: 248px;
}
.plots tbody th {
  padding-top: 6px;
}
.plots td:last-child {
  position: relative;
}
.withdrawn td:last-child::after {
  content: "";
  position: absolute;
  right: -6px;
  top: -2px;
  bottom: -2px;
  width: 10px;
  background: #ff0d1e;
}

/* dock */
.dock {
  position: absolute;
  left: 61px;
  bottom: 0;
  width: 2439px;
  height: 97px;
  padding-left: 5px;
  display: flex;
  align-items: flex-start;
  border-radius: 14px 14px 0 0;
  background: linear-gradient(90deg, #46678a, #4d7096 50%, #567da5);
}
.dock-item {
  width: 77.2px;
  flex: none;
  display: flex;
  flex-direction: column;
  align-items: center;
  padding-top: 12px;
}
.dock-item svg {
  width: 66px;
  height: 66px;
  overflow: visible;
}
.dock-item i {
  display: block;
  width: 8px;
  height: 8px;
  margin-top: 7px;
  border-radius: 50%;
}
.dock-item.on i {
  background: #02040f;
}
.dock-item.stack i {
  width: 74px;
  border-radius: 4px;
}
.dock-divider {
  width: 2px;
  height: 71px;
  flex: none;
  margin: 13px 17px 0;
  background: #1d3d63;
}
.elephant {
  fill: #3f4a48;
}
```
